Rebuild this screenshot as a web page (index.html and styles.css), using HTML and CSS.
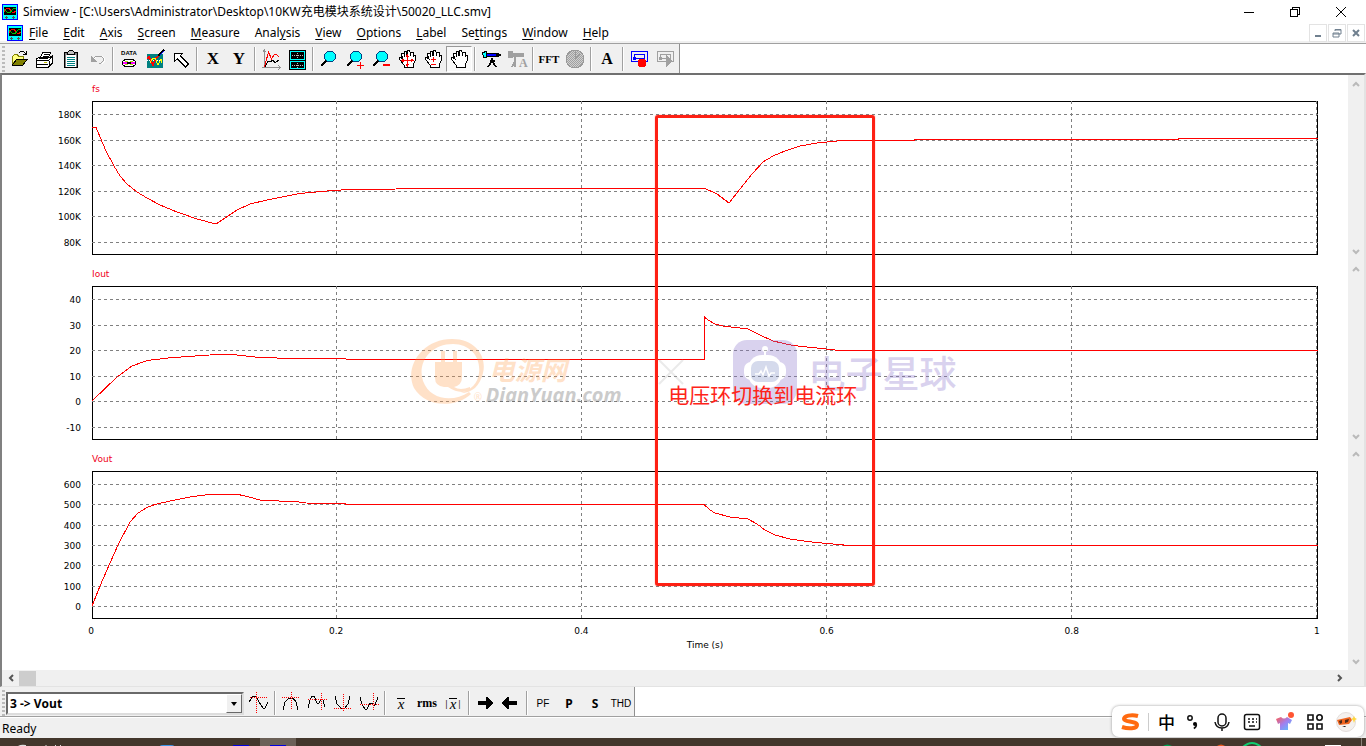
FILE: index.html
```html
<!DOCTYPE html>
<html lang="zh-CN">
<head>
<meta charset="utf-8">
<title>Simview</title>
<link rel="stylesheet" href="styles.css">
</head>
<body>
<svg class="defs" aria-hidden="true">
  <symbol id="app" viewBox="0 0 16 16"><path fill="#00f" d="M0 0h16v16H0z"/><path fill="#0ff" d="M1 1h14v14H1z"/><path d="M2 3h12v8H2z"/><path fill="none" stroke="red" d="M2 8l3-4h2l2 3 2 2 3-2"/><path fill="none" stroke="#00c000" d="M2 5l3 3 3 1 3-4 3-1"/><path stroke="#555" d="M3 13.500h3M4.500 12v3M10 13.500h3M11.500 12v3"/></symbol>
  <symbol id="up" viewBox="0 0 8 6"><path fill="none" stroke="#bababa" stroke-width="2" d="M1 5l3-3 3 3"/></symbol>
  <symbol id="down" viewBox="0 0 8 6"><path fill="none" stroke="#bababa" stroke-width="2" d="M1 1l3 3 3-3"/></symbol>
  <symbol id="lens" viewBox="0 0 24 24"><path stroke="#000" stroke-width="2.500" d="M4 19l6-6"/><circle cx="13" cy="9.500" r="5.500" fill="#0ff" stroke="#004080"/></symbol>
  <symbol id="hand" viewBox="0 0 24 24"><path fill="#fff" stroke="#000" d="M9 20v-2l-4-5-1-2 1-1 3 2-2-5 1-1 2 1 1 3-1-5 1-1h1l1 5V4l2-1 1 2v4l1-4 2 0v5l1-2 2 1-1 5-2 4v2z"/></symbol>
</svg>

<header class="titlebar">
  <svg class="app"><use href="#app"/></svg>
  <h1>Simview - [C:\Users\Administrator\Desktop\10KW充电模块系统设计\50020_LLC.smv]</h1>
  <div class="winbtns">
    <button aria-label="Minimize"><svg viewBox="0 0 10 10"><path d="M0 5.500h10"/></svg></button>
    <button aria-label="Restore"><svg viewBox="0 0 10 10"><path d="M.5 2.500h7v7h-7zM2.500 2V.5h7v7H8"/></svg></button>
    <button aria-label="Close"><svg viewBox="0 0 10 10"><path class="smooth" d="M0 0l10 10M10 0L0 10"/></svg></button>
  </div>
</header>

<nav class="menubar">
  <svg class="app"><use href="#app"/></svg>
  <button><u>F</u>ile</button><button><u>E</u>dit</button><button><u>A</u>xis</button><button><u>S</u>creen</button><button><u>M</u>easure</button><button>Anal<u>y</u>sis</button><button><u>V</u>iew</button><button><u>O</u>ptions</button><button><u>L</u>abel</button><button>Se<u>t</u>tings</button><button><u>W</u>indow</button><button><u>H</u>elp</button>
  <div class="mdibtns">
    <button aria-label="Minimize document"><svg viewBox="0 0 10 10"><path stroke-width="2" d="M2 8h6"/></svg></button>
    <button aria-label="Restore document"><svg viewBox="0 0 10 10"><path d="M1 5h6v4H1zM3 3V1.500h6V6H7M3 2h6M1 6h6"/></svg></button>
    <button aria-label="Close document"><svg viewBox="0 0 10 10"><path stroke-width="2" d="M2 2l6 6M8 2L2 8"/></svg></button>
  </div>
</nav>

<div class="barrow top">
<div class="toolbar" role="toolbar" aria-label="Main">
  <span class="grip"></span>
  <button aria-label="Open"><svg viewBox="0 0 24 24"><path fill="#ffff80" stroke="#808000" d="M5.500 17V9.500l2-2h3l1 2h5V12H10z"/><path fill="#808000" stroke="#000" d="M5.500 18l4-5.500H20L16 18z"/><path fill="none" stroke="#000" d="M12 6l2-2h2l3 3M19.500 4v3.500H16"/></svg></button>
  <button aria-label="Print"><svg viewBox="0 0 24 24"><path fill="#fff" stroke="#000" d="M7 11l3-6h8l-3 6zM3.500 12l3-2h11l2-1v7l-4 4h-12z"/><path stroke="#000" d="M11 7h5M10 9h5M4 13.500h12M16 13l3-3M4 17.500h11M16 14v6"/><path stroke="#c0c000" d="M11 15.500h3"/></svg></button>
  <button aria-label="Copy"><svg viewBox="0 0 24 24"><path fill="#808080" stroke="#000" d="M5.500 5.500h13v15h-13z"/><path fill="#fff" d="M7 8h10v12H7z"/><path fill="#c0c0c0" stroke="#000" d="M8.500 7.500v-2l2-2h3l2 2v2z"/><path stroke="#008080" d="M8 10.500h8M8 12.500h8M8 14.500h8M8 16.500h8M8 18.500h8"/></svg></button>
  <button aria-label="Undo" disabled><svg viewBox="0 0 24 24"><path fill="none" stroke="#fff" d="M8 13l3-3 5-1 3 2v4l-2 2"/><path fill="none" stroke="#a0a0a0" d="M7 13l4-4h5l2 2v3l-2 2h-2"/><path fill="#a0a0a0" d="M6 9v6h6z"/></svg></button>
  <span class="sep"></span>
  <button aria-label="Data"><svg viewBox="0 0 24 24"><text class="tiny" x="12" y="8" text-anchor="middle">DATA</text><ellipse cx="12" cy="16" rx="7" ry="4" fill="#fff" stroke="#000"/><path stroke="#f0f" stroke-width="2" d="M6 16h4M14 16h4"/><path stroke="#a0e000" d="M8 14l3 1M13 17l3 1M13 15l3-1M8 18l3-1"/><ellipse cx="12" cy="16" rx="2" ry="1" fill="#fff" stroke="#000"/></svg></button>
  <button aria-label="Redraw"><svg viewBox="0 0 24 24"><path fill="#008080" d="M4 7h16v14H4z"/><path stroke="#fff" stroke-dasharray="1 1" d="M4 13.500h16"/><path fill="none" stroke="red" stroke-width="1.500" d="M4 12l2-2 4 8 3-7 3-2"/><path fill="none" stroke="#ff0" d="M7 16l3-5h2l3 7 3-6 1 4"/><path stroke="#000" stroke-width="2" d="M15 9l6-6"/><path stroke="#00f" d="M17 8l4-4"/></svg></button>
  <button aria-label="Select"><svg viewBox="0 0 24 24"><path fill="#fff" stroke="#000" d="M5.500 6h8l-2 3 8 8-3 3-8-8-3 2z"/></svg></button>
  <span class="sep"></span>
  <button class="serif">X</button><button class="serif">Y</button>
  <span class="sep"></span>
  <button aria-label="Add curves"><svg viewBox="0 0 24 24"><path fill="none" stroke="#909090" d="M5.500 4v17M4 5l1.500-2L7 5M3 20.500h18M19 18l2 2.500L19 23"/><path fill="none" stroke="red" d="M5.500 20l4-15 3 7 3-5h2l2 3"/><path fill="none" stroke="#000" d="M6 20l3-6 2 1 3-2 2 3 4-3"/></svg></button>
  <button aria-label="Add screen"><svg viewBox="0 0 24 24"><path d="M4 3h17v20H4z"/><path fill="none" stroke="#0ff" d="M5.500 4.500h14v8h-14zM5.500 14.500h14v7h-14z"/><path stroke="#bbb" stroke-dasharray="1 1" d="M7 8.500h11M7 18.500h11M12.500 6v6M12.500 16v5"/></svg></button>
  <span class="sep"></span>
  <button aria-label="Zoom"><svg><use href="#lens"/></svg></button>
  <button aria-label="Zoom in"><svg viewBox="0 0 24 24"><use href="#lens"/><path stroke="red" d="M14 18.500h7M17.500 15v7"/></svg></button>
  <button aria-label="Zoom out"><svg viewBox="0 0 24 24"><use href="#lens"/><path stroke="red" stroke-width="2" d="M14 18h7"/></svg></button>
  <button aria-label="Pan all"><svg viewBox="0 0 24 24"><use href="#hand"/><path fill="none" stroke="red" d="M7 13.500h11M12.500 8v11M11 10l1.500-2 1.500 2M11 17l1.500 2 1.500-2M9 12l-2 1.500L9 15M16 12l2 1.500-2 1.500"/></svg></button>
  <button aria-label="Pan vertical"><svg viewBox="0 0 24 24"><use href="#hand"/><path fill="none" stroke="red" d="M10 12.500h5M12.500 10v5M10 17.500h5"/></svg></button>
  <button class="on" aria-label="Pan" aria-pressed="true"><svg><use href="#hand"/></svg></button>
  <span class="sep"></span>
  <button aria-label="View curve"><svg viewBox="0 0 24 24"><path fill="none" stroke="#000" stroke-width="1.500" d="M13 11v3l-4 6M13 14l4 6M11 14h5"/><path fill="#00f" stroke="#000" d="M7.500 6.500h10v3h-10z"/><path fill="#0ff" stroke="#000" d="M3.500 5.500l4-1v6h-3z"/><path stroke="#000" stroke-width="2" d="M17 8h5M19 6v4"/></svg></button>
  <button aria-label="View curve automatically" disabled><svg viewBox="0 0 24 24"><path fill="none" stroke="#a0a0a0" stroke-width="2" d="M10 10v4l-3 6M10 14v6"/><path fill="#a0a0a0" d="M3 4h5v2h11v4H8v1H3z"/><text class="glyph" x="14" y="20">A</text></svg></button>
  <span class="sep"></span>
  <button class="serif fft">FFT</button>
  <button aria-label="Time" disabled><svg viewBox="0 0 24 24"><defs><pattern id="dither" width="2" height="2" patternUnits="userSpaceOnUse"><path fill="#a0a0a0" d="M0 0h1v1H0zM1 1h1v1H1z"/><path fill="#d0d0d0" d="M1 0h1v1H1zM0 1h1v1H0z"/></pattern></defs><circle cx="12" cy="12" r="9" fill="url(#dither)" stroke="#999"/><path stroke="#999" fill="none" d="M12 5v7l5-5"/></svg></button>
  <span class="sep"></span>
  <button class="serif text">A</button>
  <span class="sep"></span>
  <button aria-label="Record"><svg viewBox="0 0 24 24"><path fill="none" stroke="#00f" d="M4.500 4.500h16v10h-16zM7.500 7.500h10v4h-10z"/><path fill="#00f" d="M6 10h3v3H6z"/><circle cx="15" cy="16" r="4.500" fill="red"/></svg></button>
  <button aria-label="Play" disabled><svg viewBox="0 0 24 24"><path fill="none" stroke="#a0a0a0" d="M4.500 4.500h16v10h-16zM7.500 7.500h10v4h-10z"/><path fill="#a0a0a0" d="M6 10h3v3H6zM13 8l6 6-6 7z"/></svg></button>
</div>
</div>

<main class="view">
  <div class="charts">
    <section class="panel">
      <h2>fs</h2>
      <svg class="ylab" viewBox="0 0 90 154"><text x="79" y="17">180K</text><text x="79" y="43">160K</text><text x="79" y="68">140K</text><text x="79" y="94">120K</text><text x="79" y="119">100K</text><text x="79" y="145">80K</text></svg>
      <svg class="plot" viewBox="0 0 1226 154" preserveAspectRatio="none">
        <path class="frame" d="M.5 .5h1225v153H.5z"/>
        <path class="grid" d="M0 13.500h1226M0 39.500h1226M0 64.500h1226M0 90.500h1226M0 115.500h1226M0 141.500h1226M244.500 0v154M489.500 0v154M734.500 0v154M979.500 0v154M1224.500 0v154"/>
        <polyline class="curve" points="0,26.500 4,26.500 14,50 22,65 28,75 35,83 45,91 55,97 68,104 85,111 105,118 124,123 145,109 158,103 175,99 208,92.500 235,90 256,88.500 304,88 306,87.500 613,87.500 625,93 637,102 648,88 660,73 671,61 681,55 693,50 708,45 725,42 735,41 750,39.500 822,39.500 823,38.500 1086,38.500 1087,37.500 1226,37.500"/>
      </svg>
      <div class="scroll"><button aria-label="Scroll up"><svg><use href="#up"/></svg></button><button aria-label="Scroll down"><svg><use href="#down"/></svg></button></div>
    </section>
    <section class="panel">
      <h2>Iout</h2>
      <svg class="ylab" viewBox="0 0 90 154"><text x="79" y="17">40</text><text x="79" y="43">30</text><text x="79" y="68">20</text><text x="79" y="94">10</text><text x="79" y="119">0</text><text x="79" y="145">-10</text></svg>
      <svg class="plot" viewBox="0 0 1226 154" preserveAspectRatio="none">
        <path class="frame" d="M.5 .5h1225v153H.5z"/>
        <path class="grid" d="M0 13.500h1226M0 39.500h1226M0 64.500h1226M0 90.500h1226M0 115.500h1226M0 141.500h1226M244.500 0v154M489.500 0v154M734.500 0v154M979.500 0v154M1224.500 0v154"/>
        <polyline class="curve" points="0,115 25,91 40,80 55,74.500 76,72 103,70 125,68.500 141,68.500 163,71 196,72.500 254,73 255,73.500 612.500,73.500 612.500,31 616,34 623,38 631,40 656,43 668,49 681,55 701,59.500 725,62 748,64.500 1226,64.500"/>
      </svg>
      <div class="scroll"><button aria-label="Scroll up"><svg><use href="#up"/></svg></button><button aria-label="Scroll down"><svg><use href="#down"/></svg></button></div>
    </section>
    <section class="panel last">
      <h2>Vout</h2>
      <svg class="ylab" viewBox="0 0 90 148"><text x="79" y="17">600</text><text x="79" y="37">500</text><text x="79" y="58">400</text><text x="79" y="78">300</text><text x="79" y="98">200</text><text x="79" y="119">100</text><text x="79" y="139">0</text></svg>
      <svg class="plot" viewBox="0 0 1226 148" preserveAspectRatio="none">
        <path class="frame" d="M.5 .5h1225v147H.5z"/>
        <path class="grid" d="M0 13.500h1226M0 33.500h1226M0 54.500h1226M0 74.500h1226M0 94.500h1226M0 115.500h1226M0 135.500h1226M244.500 0v148M489.500 0v148M734.500 0v148M979.500 0v148M1224.500 0v148"/>
        <polyline class="curve" points="0,135 8,115 18,92 26,74 38,51 46,42 56,36 63,33.500 78,30 98,26 120,23 144,23 153,25 170,29.500 203,30.500 214,32 253,32.500 254,33.500 612,33.500 618,39 623,42 638,46 656,48 665,53 673,59 683,64 698,68 715,70.500 735,72.500 757,74.500 1226,74.500"/>
      </svg>
      <div class="axis"><span>0</span><span>0.2</span><span>0.4</span><span>0.6</span><span>0.8</span><span>1</span></div>
      <p class="axisname">Time (s)</p>
      <div class="scroll"><button aria-label="Scroll up"><svg><use href="#up"/></svg></button><button aria-label="Scroll down"><svg><use href="#down"/></svg></button></div>
    </section>

    <div class="overlay">
      <div class="mark dianyuan">
        <svg viewBox="0 0 76 68"><path fill="#ff9d4d" d="M61 56C46 70 16 70 4 50-6 29 12 1 42 1c24 0 35 18 31 34-3 13-11 20-22 20 10-3 17-10 18-20C71 20 61 6 43 6 20 6 7 25 13 43c7 19 30 22 46 11z"/><path fill="#ff9d4d" d="M25 24h27v15q0 8-8 10 6 4 16 0v3q-10 5-22-3h-4q-9-1-9-9zM31 13h4v11h-4zM43 13h4v11h-4z"/></svg>
        <div><b class="cn">电源网</b><b class="en">DianYuan.com</b></div><i class="reg">®</i>
      </div>
      <svg class="mark cross" viewBox="0 0 26 26"><path stroke="#bbb" stroke-width="2" d="M1 1l24 24M25 1L1 25"/></svg>
      <div class="mark planet">
        <svg viewBox="0 0 64 64"><rect width="64" height="64" rx="14" fill="#8d78cc"/><circle cx="32" cy="9" r="3" fill="#fff"/><path stroke="#fff" stroke-width="2" d="M32 9v8"/><rect x="11" y="22" width="42" height="18" rx="7" fill="#fff"/><rect x="15" y="15" width="34" height="33" rx="14" fill="#fff"/><rect x="18" y="21" width="28" height="21" rx="7" fill="#8290c6"/><path fill="none" stroke="#fff" stroke-width="1.500" d="M22 34h4l2-3 2 4 3-8 3 9 2-3h4"/></svg>
        <b>电子星球</b>
      </div>
      <div class="box"></div>
      <p class="note">电压环切换到电流环</p>
    </div>
  </div>
  <div class="hscroll">
    <button aria-label="Scroll left"><svg viewBox="0 0 6 8"><path d="M5 1L2 4l3 3"/></svg></button><span class="thumb"></span>
    <button aria-label="Scroll right"><svg viewBox="0 0 6 8"><path d="M1 1l3 3-3 3"/></svg></button>
  </div>
</main>

<div class="barrow bottom">
<div class="toolbar" role="toolbar" aria-label="Measure">
  <span class="grip"></span>
  <div class="combo"><select aria-label="Curve"><option>3 -&gt; Vout</option></select><span class="drop"></span></div>
  <button aria-label="Next zero"><svg viewBox="0 0 24 24"><path class="w" d="M2 11l4-6h3l3 6 4 6h2l3-6"/><path class="d" d="M3 6.500h17M9.500 1v21"/></svg></button>
  <span class="sep"></span>
  <button aria-label="Global maximum"><svg viewBox="0 0 24 24"><path class="w" d="M4 19l2-8 4-4h4l3 4 2 8"/><path class="d" d="M3 6.500h18M12.500 1v18"/></svg></button>
  <button aria-label="Next maximum"><svg viewBox="0 0 24 24"><path class="w" d="M3 17l2-8 2-4h2l3 7h2l2-4 2 1 2 7"/><path class="d" d="M3 8.500h19M16.500 2v18"/></svg></button>
  <button aria-label="Global minimum"><svg viewBox="0 0 24 24"><path class="w" d="M4 5l2 8 4 4h4l3-4 2-8"/><path class="d" d="M3 17.500h18M12.500 3v18"/></svg></button>
  <button aria-label="Next minimum"><svg viewBox="0 0 24 24"><path class="w" d="M3 6l2 7 3 5h2l3-6h2l1 2h2l3-8"/><path class="d" d="M3 13.500h19M16.500 2v18"/></svg></button>
  <span class="sep"></span>
  <button aria-label="Average"><em class="bar">x</em></button><button class="rms">rms</button><button aria-label="Absolute average"><span class="abs">|<em class="bar">x</em>|</span></button>
  <span class="sep"></span>
  <button aria-label="Next"><svg viewBox="0 0 24 24"><path d="M5 10h8V6h2l5 6-5 6h-2v-4H5z"/></svg></button>
  <button aria-label="Previous"><svg viewBox="0 0 24 24"><path d="M18 10h-8V6H8l-5 6 5 6h2v-4h8z"/></svg></button>
  <span class="sep"></span>
  <button class="sans">PF</button><button class="sans heavy">P</button><button class="sans heavy">S</button><button class="sans">THD</button>
</div>
</div>

<footer class="status">Ready</footer>
<div class="taskbar">
  <svg class="tl" viewBox="0 0 300 8"><path fill="#6b6158" d="M260 0h36v8h-36z"/><path fill="#ddd" d="M18 8q3-2 8-1v1zM45 8l1-1 1 1zM55 7h1v1h-1zM60 7h1v1h-1z"/><path fill="#3b93e8" d="M160 8q0-1 3-1h8q3 0 3 1z"/><path fill="#0000e0" d="M233 7h16v1h-16zM270 7h16v1h-16z"/></svg>
  <svg class="tr" viewBox="0 0 220 8"><path fill="#00a050" d="M17 8q4-3 9 0z"/><path fill="#e85a20" d="M71 8q4-3 8 0z"/><path fill="none" stroke="#10cc70" stroke-width="2" d="M97 9q9-8 18 0"/><path fill="#fff" d="M179 7h16v1h-16z"/><path stroke="#8a8279" d="M215.500 0v8"/></svg>
</div>

<div class="ime">
  <svg class="sogou" viewBox="0 0 20 18"><path fill="none" stroke="#ff6a10" stroke-width="4" d="M18 3C11 1 4 3 4 6s13 2 13 6-9 4-15 2"/></svg>
  <span class="rule"></span>
  <b>中</b>
  <svg viewBox="0 0 18 18"><circle cx="6" cy="5" r="2.200" fill="none" stroke="#111" stroke-width="1.500"/><circle cx="11" cy="11" r="2"/><path fill="none" stroke="#111" stroke-width="1.500" d="M12.300 11q.5 3-2.500 4.500"/></svg>
  <svg viewBox="0 0 18 18"><rect x="5" y="1" width="8" height="12" rx="4" fill="none" stroke="#111" stroke-width="1.500"/><path fill="none" stroke="#111" stroke-width="1.500" d="M2 9q1 6 7 6t7-6M9 15v3"/></svg>
  <svg viewBox="0 0 18 18"><rect x="1.500" y="1.500" width="15" height="15" rx="2" fill="none" stroke="#111" stroke-width="1.500"/><path stroke="#111" stroke-width="1.500" stroke-dasharray="2 2" d="M5 6h9M5 9h9"/><path stroke="#111" stroke-width="1.500" d="M6 13h6"/></svg>
  <svg class="skin" viewBox="0 0 20 20"><defs><linearGradient id="g" x1="0" y1="0" x2="1" y2="1"><stop offset="0" stop-color="#ff5a52"/><stop offset=".5" stop-color="#a080f0"/><stop offset="1" stop-color="#50c8ff"/></linearGradient></defs><path fill="url(#g)" d="M6 5q3 3 6 0l5 3-2 4-2-1v7H5v-7l-2 1-2-5z"/><circle cx="16" cy="3" r="3" fill="#ff5533"/></svg>
  <svg viewBox="0 0 18 18"><path fill="none" stroke="#111" stroke-width="1.600" d="M2 2h5v5H2zM2 11h5v5H2zM11 11h5v5h-5z"/><circle cx="13.500" cy="4.500" r="2.700" fill="none" stroke="#111" stroke-width="1.600"/></svg>
  <svg class="face" viewBox="0 0 22 22"><circle cx="11" cy="11" r="9.500" fill="#f4f1ef" stroke="#e4dedb"/><path fill="#f0641e" d="M2 9l13-3 2 3-3 4-10 1z"/><path fill="#4a2a1a" d="M4 10l3-1v3l-2 1zM10 9l4-1-1 3-3 1z"/><path d="M7 15l4 0-1 1z"/><path fill="#ffd83c" d="M19 5l1 2 2 1-2 1-1 3-1-3-2-1 2-1z"/></svg>
</div>
</body>
</html>
```

FILE: styles.css
```css
* { box-sizing: border-box; }
body {
  margin: 0;
  height: 100vh;
  display: flex;
  flex-direction: column;
  position: relative;
  overflow: hidden;
  background: #fff;
  color: #000;
  font-family: "Noto Sans", "Noto Sans CJK SC", sans-serif;
  font-size: 12px;
}
button { border: 0; padding: 0; margin: 0; background: none; color: inherit; font: inherit; display: flex; align-items: center; justify-content: center; }
h1, h2, p { margin: 0; font-weight: normal; }
.defs { position: absolute; width: 0; height: 0; }
.app { width: 16px; height: 16px; flex: none; shape-rendering: crispEdges; }

.titlebar { display: flex; align-items: center; height: 23px; padding-left: 2px; flex: none; }
.titlebar h1 { margin-left: 5px; font-size: 12px; line-height: 20px; white-space: nowrap; }
.winbtns { display: flex; margin-left: auto; }
.winbtns button { width: 46px; height: 20px; }
.winbtns svg { width: 10px; height: 10px; fill: none; stroke: #000; shape-rendering: crispEdges; overflow: visible; }
.winbtns { padding-right: 2px; }
.winbtns .smooth { shape-rendering: auto; }

.menubar { display: flex; align-items: center; height: 21px; padding-left: 7px; flex: none; border-bottom: 1px solid #a0a0a0; box-shadow: inset 0 -2px #f0f0f0; }
.menubar .app { margin-right: 6px; }
.menubar > button { margin-right: 15px; height: 18px; display: block; font-size: 12px; line-height: 18px; text-underline-offset: 2px; }
.mdibtns { display: flex; gap: 1px; margin-left: auto; padding-right: 1px; }
.mdibtns button { width: 18px; height: 18px; border: 1px solid #e3e3e3; background: #fff; }
.mdibtns svg { width: 10px; height: 10px; fill: none; stroke: #70808f; }

.barrow { display: flex; flex: none; background: #fff; }
.top { height: 29px; }
.toolbar { display: flex; align-items: center; background: #f0f0f0; border-right: 1px solid #909090; }
.top .toolbar { padding-right: 1px; }
.toolbar button { width: 26px; height: 26px; flex: none; }
.toolbar svg { width: 24px; height: 24px; shape-rendering: crispEdges; }
.grip { width: 3px; height: 26px; margin: 0 1px 0 2px; background: repeating-linear-gradient(#bbb 0 2px, #f0f0f0 2px 4px); }
.sep { width: 6px; height: 24px; flex: none; border-left: 2px solid #f0f0f0; background: linear-gradient(90deg, #a0a0a0 1px, #fff 1px 2px, #f0f0f0 2px); }
.toolbar .on { border: 1px solid #999; border-right-color: #fff; border-bottom-color: #fff; background: #f8f8f8; }
.serif { font: bold 17px "Liberation Serif", serif; }
.toolbar .fft { font-size: 11px; }
.toolbar .text { font-size: 16px; }
.tiny { font: bold 6px "Liberation Sans", sans-serif; }
.glyph { font: bold 12px "Liberation Serif", serif; fill: #a0a0a0; }

.view { flex: 1; min-height: 0; display: flex; flex-direction: column; border-left: 2px solid #808080; border-top: 2px solid #707070; border-right: 2px solid #e3e3e3; border-bottom: 1px solid #e3e3e3; }
.charts { flex: 1; min-height: 0; position: relative; display: flex; flex-direction: column; }
.panel { display: grid; grid-template-columns: 90px 1fr 30px 16px; grid-template-rows: 26px 154px 5px; }
.last { flex: 1; grid-template-rows: 26px 148px 17px 14px 1fr; }
.panel h2 { grid-area: 1 / 2; font: 9px/14px "DejaVu Sans", sans-serif; color: #f00020; align-self: start; padding-top: 7px; }
.ylab { grid-area: 2 / 1; width: 90px; height: 100%; font: 9px "DejaVu Sans", sans-serif; text-anchor: end; overflow: visible; }
.plot { grid-area: 2 / 2; width: 100%; height: 100%; shape-rendering: crispEdges; }
.plot * { fill: none; vector-effect: non-scaling-stroke; }
.frame { stroke: #000; }
.grid { stroke: #808080; stroke-dasharray: 3 3; }
.curve { stroke: #f00; }
.scroll { grid-area: 1 / 4 / -1 / 5; display: flex; flex-direction: column; justify-content: space-between; background: #f0f0f0; padding: 1px 0; }
.scroll button { width: 16px; height: 15px; }
.scroll svg { width: 8px; height: 6px; }
.axis { grid-area: 3 / 2; display: flex; justify-content: space-between; padding-top: 5px; margin: 0 -8px 0 -10px; font: 9px/14px "DejaVu Sans", sans-serif; }
.axis span { width: 18px; text-align: center; }
.axisname { grid-area: 4 / 2; text-align: center; font: 9px/14px "DejaVu Sans", sans-serif; padding-top: 2px; }
.hscroll { display: flex; align-items: center; height: 16px; background: #f0f0f0; padding-right: 16px; }
.hscroll button { width: 17px; height: 16px; }
.hscroll button:last-child { margin-left: auto; }
.hscroll svg { width: 6px; height: 8px; fill: none; stroke: #555; stroke-width: 2; }
.thumb { width: 17px; height: 15px; background: #cdcdcd; }

.overlay { position: absolute; left: 90px; right: 46px; top: 0; height: 595px; pointer-events: none; }
.mark { position: absolute; white-space: nowrap; }
.dianyuan { left: 26%; top: 263px; display: flex; opacity: .3; margin-left: -1px; }
.dianyuan svg { width: 76px; height: 68px; }
.dianyuan div { display: flex; flex-direction: column; padding-top: 15px; }
.cn { font: italic bold 26px/32px "Noto Sans CJK SC", sans-serif; color: #ff9d4d; padding-left: 3px; }
.en { font: italic bold 20px/20px "Open Sans", sans-serif; color: #555; }
.reg { position: absolute; left: 64px; top: 52px; font-size: 10px; line-height: 14px; font-style: normal; color: #ff9d4d; }
.cross { left: 46%; top: 284px; width: 26px; height: 26px; opacity: .3; margin-left: 2px; }
.planet { left: 52%; top: 265px; display: flex; align-items: center; gap: 12px; opacity: .33; margin-left: 3px; }
.planet svg { width: 64px; height: 64px; }
.planet b { font: 500 37px/60px "Noto Sans CJK SC", sans-serif; color: #8d78cc; }
.box { position: absolute; left: 46%; right: 36%; top: 40px; height: 471px; margin: 0 2px 0 -1px; border: 3px solid #fe2014; border-radius: 3px; box-shadow: 0 0 1px #fe2014; }
.note { position: absolute; left: 47%; top: 304px; font: 21px/30px "Noto Sans CJK SC", sans-serif; color: #fe2419; white-space: nowrap; }

.bottom { height: 30px; border-bottom: 1px solid #a0a0a0; }
.bottom .toolbar { padding-top: 3px; }
.combo { position: relative; width: 238px; height: 23px; border: 2px solid #696969; border-right-color: #ddd; border-bottom-color: #ddd; margin-right: 2px; }
.combo select { appearance: none; width: 100%; height: 100%; border: 0; border-radius: 0; background: #fff; color: #000; padding: 0 2px; font: bold 12px "Open Sans", sans-serif; }
.drop { position: absolute; right: 0; top: 0; bottom: 0; width: 16px; background: #f0f0f0; border: 1px solid #fff; border-right-color: #696969; border-bottom-color: #696969; pointer-events: none; }
.drop::after { content: ""; position: absolute; left: 4px; top: 7px; border: 4px solid transparent; border-top-color: #000; border-bottom: 0; border-left-width: 3px; border-right-width: 3px; }
.w { fill: none; stroke: #000; }
.d { fill: none; stroke: red; stroke-dasharray: 1 1; shape-rendering: auto; }
.bar { border-top: 1px solid #000; font: italic 15px/10px "Liberation Serif", serif; padding: 0 1px; }
.abs { display: flex; align-items: center; font-size: 8px; }
.toolbar .rms { font: bold 12px "Liberation Serif", serif; }
.toolbar .sans { font: 10px "Liberation Sans", sans-serif; }
.toolbar .heavy { font: bold 12px "Noto Sans", sans-serif; }
.status { flex: none; height: 21px; background: #f0f0f0; border-top: 1px solid #fff; padding: 2px 0 0 2px; font-size: 12px; line-height: 18px; }
.taskbar { flex: none; height: 8px; background: #43372c; display: flex; justify-content: space-between; }
.tl { width: 300px; height: 8px; }
.tr { width: 220px; height: 8px; }
.ime { position: absolute; right: 2px; bottom: 9px; height: 31px; display: grid; grid-template-columns: 20px 16px 21px 31px 27px 34px 31px 30px 32px; align-items: center; justify-items: center; padding: 0 2px 0 8px; background: #fff; border-radius: 7px; box-shadow: 0 0 3px #999; }
.ime svg { width: 18px; height: 18px; }
.ime .sogou, .ime .skin { width: 20px; height: 20px; }
.ime .face { width: 22px; height: 22px; }
.ime b { font: 500 17px/24px "Noto Sans CJK SC", sans-serif; }
.rule { width: 1px; height: 18px; background: #ccc; }
```
